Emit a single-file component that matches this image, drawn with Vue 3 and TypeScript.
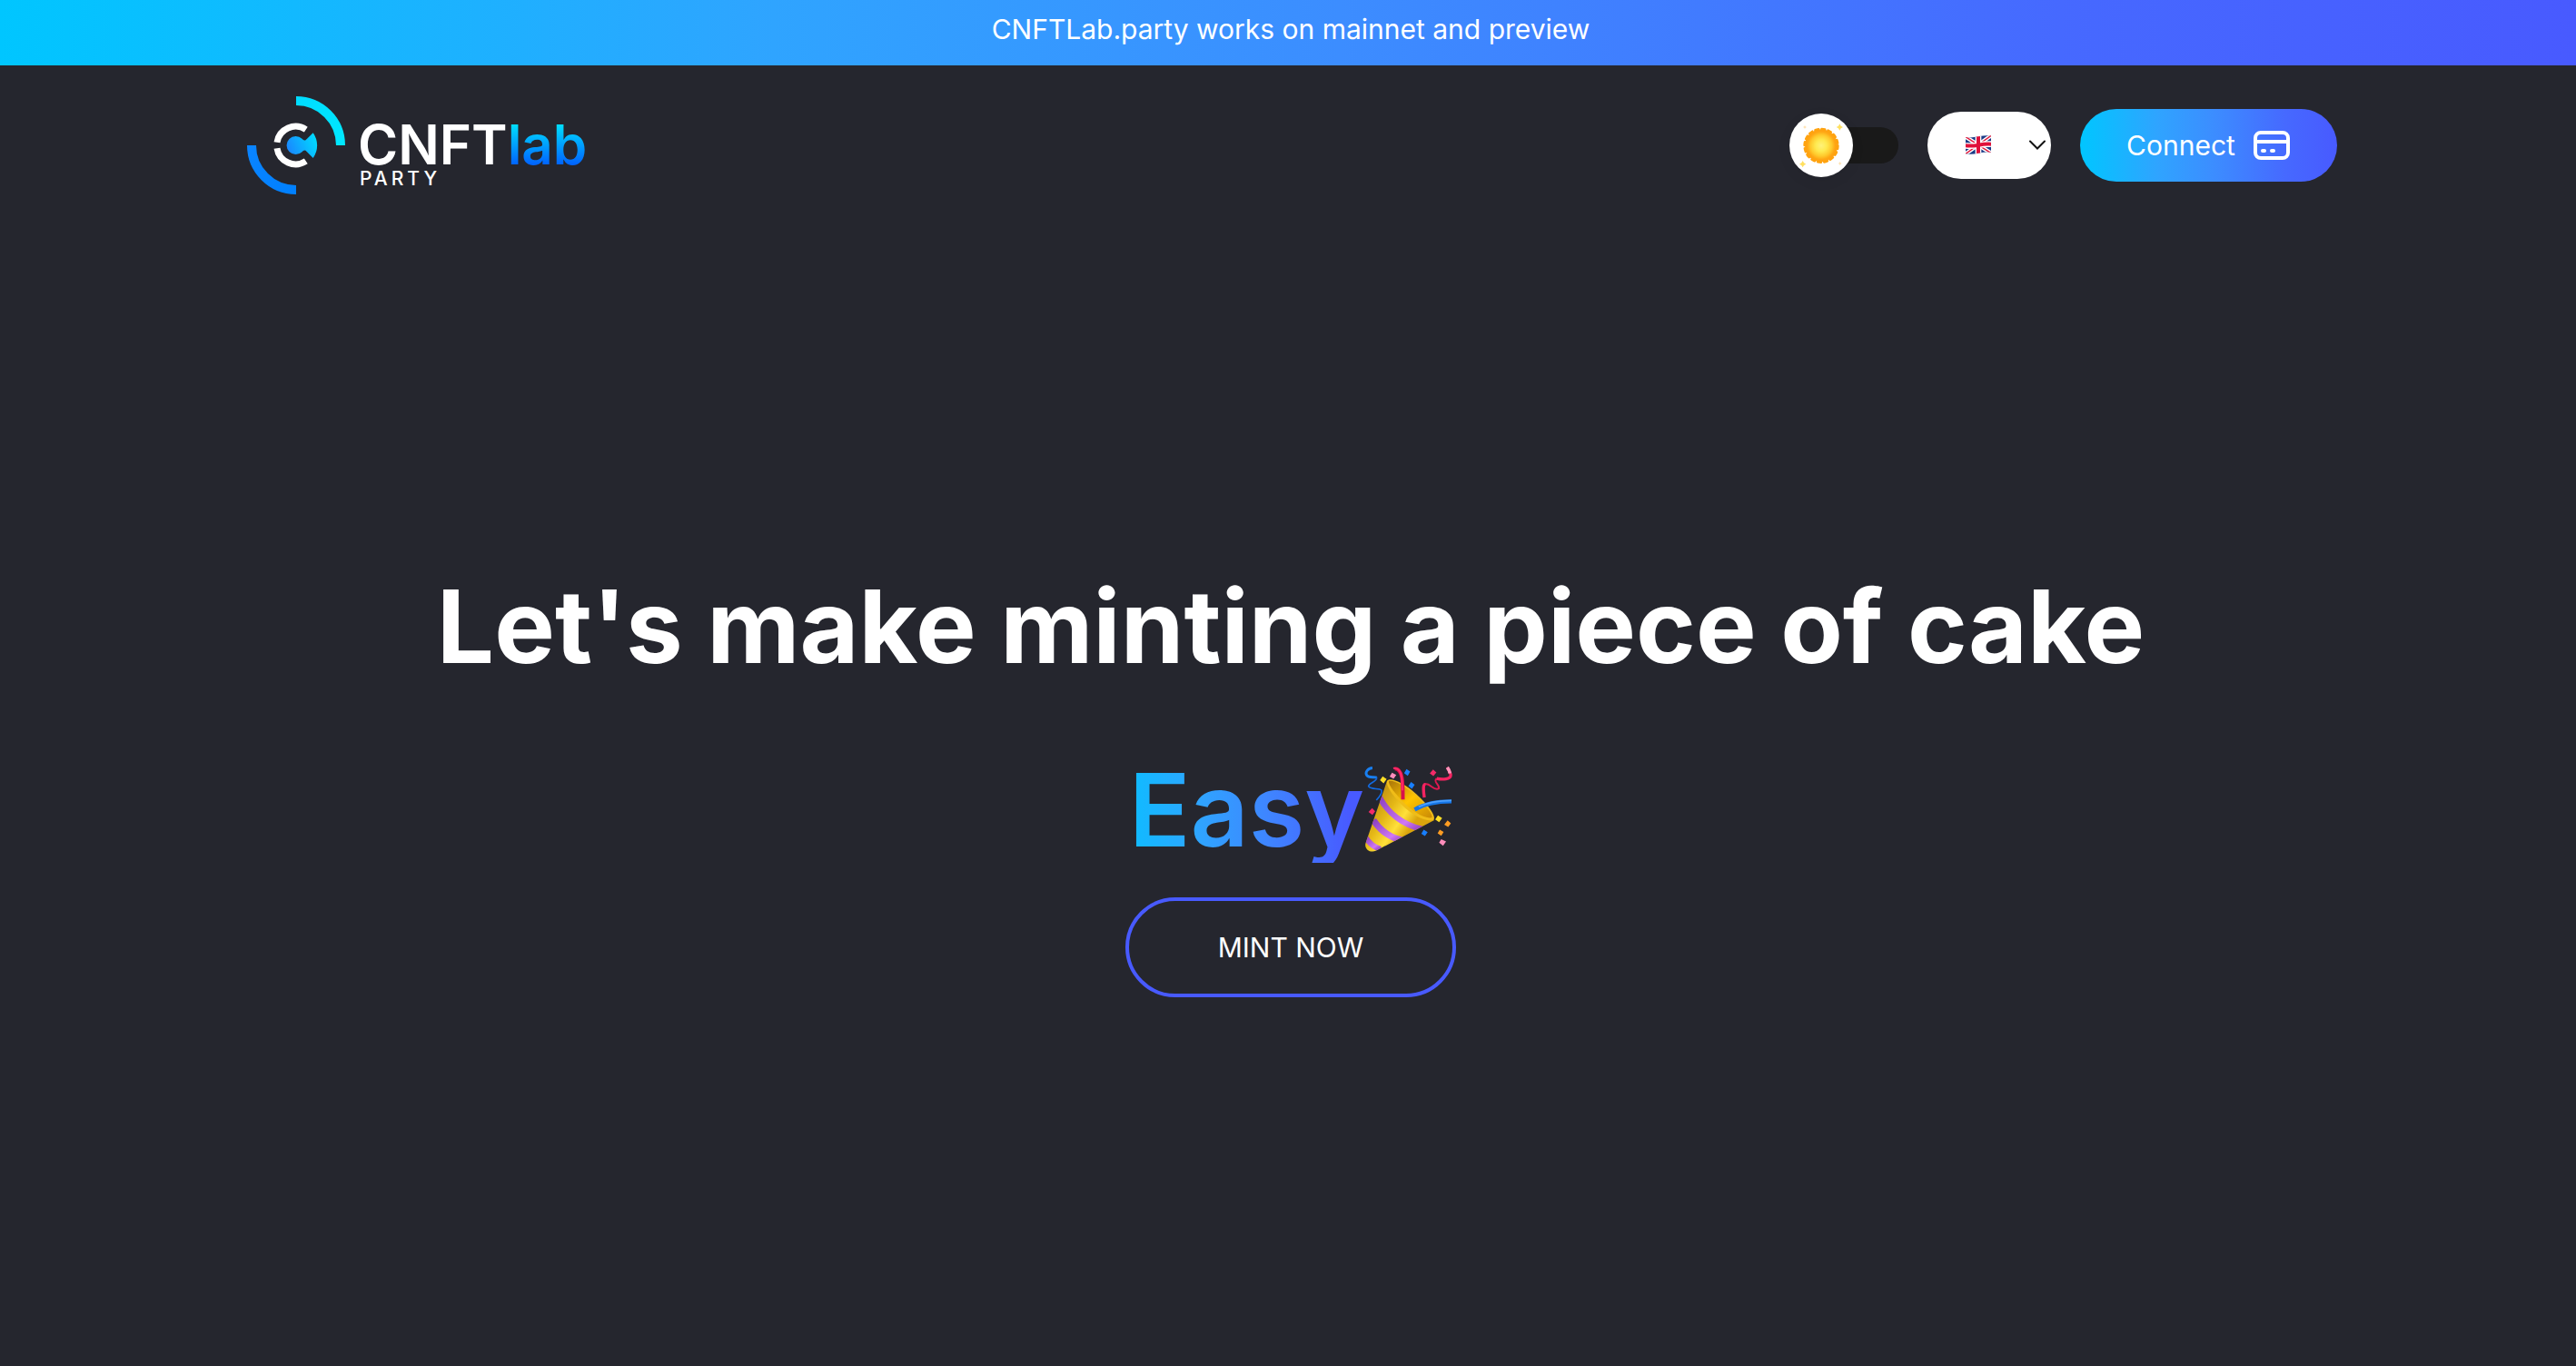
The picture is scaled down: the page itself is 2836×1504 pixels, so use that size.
<script setup lang="ts">
import { ref } from 'vue'

interface Language {
  code: string
  name: string
}

const languages: Language[] = [
  { code: 'en', name: 'English' },
  { code: 'es', name: 'Español' },
]

const language = ref('en')
const darkMode = ref(false)
const notice = 'CNFTLab.party works on mainnet and preview'
</script>

<template>
  <div class="page">
    <p class="notice">{{ notice }}</p>

    <header class="header">
      <a class="logo" href="#" aria-label="CNFTlab Party home">
        <svg width="382" height="108" viewBox="0 0 382 108">
          <defs>
            <linearGradient id="arc-top" x1="0" y1="0" x2="1" y2="1">
              <stop offset="0" stop-color="#00dcff" />
              <stop offset="1" stop-color="#00e8ff" />
            </linearGradient>
            <linearGradient id="arc-bottom" x1="0" y1="0" x2="1" y2="1">
              <stop offset="0" stop-color="#0a84ff" />
              <stop offset="1" stop-color="#0080ff" />
            </linearGradient>
            <linearGradient id="fish" gradientUnits="userSpaceOnUse" x1="44" y1="60" x2="76" y2="46">
              <stop offset="0" stop-color="#1a84ff" />
              <stop offset="1" stop-color="#00dcff" />
            </linearGradient>
            <linearGradient id="lab" gradientUnits="userSpaceOnUse" x1="0" y1="32" x2="0" y2="75">
              <stop offset="0" stop-color="#00dcff" />
              <stop offset="1" stop-color="#0064ff" />
            </linearGradient>
          </defs>
          <path d="M54 5A49 49 0 0 1 103 54" fill="none" stroke="url(#arc-top)" stroke-width="10" />
          <path d="M5 54A49 49 0 0 0 54 103" fill="none" stroke="url(#arc-bottom)" stroke-width="10" />
          <path d="M33 50.7A20.7 20.7 0 0 1 64.8 36.6M33 57.3A20.7 20.7 0 0 0 64.8 71.4" fill="none" stroke="#fff" stroke-width="7" />
          <path d="M60.5 46.8Q62.5 49.5 64.5 48.2L72.7 40.2A24 24 0 0 1 72.7 68L64.5 59.8Q62.5 58.5 60.5 61.2A10 10 0 1 1 60.5 46.8Z" fill="url(#fish)" />
          <text class="logo-main" x="122" y="75">CNFT<tspan fill="url(#lab)">lab</tspan></text>
          <text class="logo-party" x="124" y="98">PARTY</text>
        </svg>
      </a>

      <div class="controls">
        <label class="theme">
          <input v-model="darkMode" type="checkbox" role="switch" aria-label="Dark mode" />
          <span class="thumb">
            <svg width="44" height="44" viewBox="0 0 132 132">
              <defs>
                <radialGradient id="sun">
                  <stop offset="0" stop-color="#fff27a" />
                  <stop offset=".35" stop-color="#ffe94f" />
                  <stop offset=".65" stop-color="#ffc92c" />
                  <stop offset=".85" stop-color="#ffa614" />
                  <stop offset="1" stop-color="#ffa010" />
                </radialGradient>
              </defs>
              <circle cx="66" cy="67" r="54" fill="url(#sun)" />
              <circle cx="66" cy="67" r="55" fill="none" stroke="#ffa30f" stroke-width="8" stroke-linecap="round" stroke-dasharray="11 10.6" />
              <g fill="#ffe060">
                <path d="M127-5l4 7 7 4-7 4-4 7-4-7-7-4 7-4zM5 117l4 7 7 4-7 4-4 7-4-7-7-4 7-4z" />
                <path d="M12 0l2 4 4 2-4 2-2 4-2-4-4-2 4-2zM128 120l2 4 4 2-4 2-2 4-2-4-4-2 4-2z" fill="#ffe2b0" />
              </g>
            </svg>
          </span>
        </label>

        <div class="language">
          <select v-model="language" aria-label="Language">
            <option v-for="item in languages" :key="item.code" :value="item.code">{{ item.name }}</option>
          </select>
          <svg class="flag" width="28" height="22" viewBox="0 0 84 66">
            <defs>
              <clipPath id="flag-shape">
                <path d="M0 6Q20 9 42 4T84 1V56Q64 54 42 59T0 61Z" />
              </clipPath>
            </defs>
            <g clip-path="url(#flag-shape)">
              <path fill="#1c3b86" d="M0 0h84v66H0z" />
              <path d="M0 5L84 59M0 61L84 1" stroke="#fff" stroke-width="13" />
              <path d="M0 5L84 59M0 61L84 1" stroke="#e01a3c" stroke-width="4" />
              <path d="M42 0V66M0 34Q20 36 42 32T84 29" fill="none" stroke="#fff" stroke-width="20" />
              <path d="M42 0V66M0 34Q20 36 42 32T84 29" fill="none" stroke="#e0103a" stroke-width="12" />
            </g>
          </svg>
          <svg class="chevron" width="18" height="12" viewBox="0 0 18 12">
            <path d="M1 1.5l8 8 8-8" fill="none" stroke="#111" stroke-width="2" stroke-linecap="round" />
          </svg>
        </div>

        <button class="connect" type="button">
          Connect
          <svg width="40" height="32" viewBox="0 0 40 32" fill="none" stroke="#fff" stroke-width="4">
            <rect x="2" y="2" width="36" height="28" rx="6" />
            <path d="M2 12h36" />
            <path d="M10 22h2M20 22h2" stroke-linecap="round" />
          </svg>
        </button>
      </div>
    </header>

    <main class="hero">
      <h1>Let's make minting a piece of cake</h1>
      <p class="easy">
        <span>Easy</span>
        <svg width="97" height="96" viewBox="62 66 292 288" role="img" aria-label="Party popper">
          <defs>
            <linearGradient id="cone" gradientUnits="userSpaceOnUse" x1="85" y1="215" x2="200" y2="295">
              <stop offset="0" stop-color="#c99a12" />
              <stop offset=".35" stop-color="#e5b817" />
              <stop offset=".7" stop-color="#ffe03a" />
              <stop offset="1" stop-color="#dba50d" />
            </linearGradient>
            <linearGradient id="mouth" x1="0" y1="0" x2="1" y2="1">
              <stop offset="0" stop-color="#a8750a" />
              <stop offset=".5" stop-color="#ffc400" />
              <stop offset="1" stop-color="#c98a06" />
            </linearGradient>
            <linearGradient id="band" x1="0" y1="0" x2="1" y2="1">
              <stop offset="0" stop-color="#8a3fc0" />
              <stop offset=".7" stop-color="#d078f5" />
              <stop offset="1" stop-color="#8d3dbd" />
            </linearGradient>
            <clipPath id="cone-shape">
              <path d="M137 117C150 170 220 235 294 246L100 348C82 356 62 342 66 324Z" />
            </clipPath>
          </defs>
          <path d="M137 117C150 170 220 235 294 246L100 348C82 356 62 342 66 324Z" fill="url(#cone)" />
          <g clip-path="url(#cone-shape)" fill="none" stroke="url(#band)">
            <path d="M112 168C138 222 190 262 254 276" stroke-width="19" />
            <path d="M92 246C116 282 148 306 192 314" stroke-width="21" />
            <path d="M66 303C78 322 94 336 116 342" stroke-width="18" />
          </g>
          <path d="M137 117C144 100 194 122 235 160C272 194 302 232 292 246C266 254 218 228 186 195C158 167 134 135 137 117Z" fill="#f0bd18" />
          <path d="M143 117C156 110 196 132 230 163C263 194 290 226 286 238C260 242 222 218 192 187C166 160 142 132 143 117Z" fill="url(#mouth)" />
          <path d="M163 75C190 76 190 120 190 178" fill="none" stroke="#d80f4b" stroke-width="12" />
          <path d="M161 74C184 73 188 101 188 145" fill="none" stroke="#ff2866" stroke-width="7" stroke-linecap="round" />
          <path d="M229 211C260 192 300 184 351 184" fill="none" stroke="#1676e8" stroke-width="13" />
          <path d="M242 202C270 188 310 181 351 181" fill="none" stroke="#4ca0ff" stroke-width="5" />
          <path d="M89 73C74 74 64 87 70 97C76 108 97 101 103 105" fill="none" stroke="#197ff0" stroke-width="9" />
          <path d="M103 105C105 118 77 123 76 134C86 147 111 138 119 147Q123 157 102 180" fill="none" stroke="#126ae0" stroke-width="5" />
          <path d="M261 171L259 140Q261 122 274 128C286 134 297 149 309 141C313 129 288 119 302 108" fill="none" stroke="#df1950" stroke-width="6" />
          <path d="M261 171C258 152 255 125 265 128M302 108C318 112 352 113 348 94Q344 82 337 71" fill="none" stroke="#f42461" stroke-width="10" />
          <path d="M346 91Q344 80 337 71" fill="none" stroke="#ff94ba" stroke-width="11" />
          <g fill="#187fff">
            <path d="M202 77l12 8-8 14-12-9zM217 120l12 9-9 13-12-9zM259 278l13 8-9 13-12-8z" />
          </g>
          <g fill="#ffdf26">
            <path d="M123 101l13 9-10 14-12-10zM306 230l14 9-10 14-13-9z" />
          </g>
          <g fill="#ff9d22">
            <path d="M338 247l11 10-9 12-13-8zM312 278l13 7-8 13-12-8z" />
          </g>
          <g fill="#ff8dbb">
            <path d="M154 89l14 7-9 13-13-7zM317 309l16 8-10 14-13-10z" />
          </g>
          <path d="M290 78l11 10-10 12-12-9zM88 206l10 11-9 12-13-10z" fill="#f32b68" />
        </svg>
      </p>
      <a class="mint" href="#">MINT NOW</a>
    </main>
  </div>
</template>

<style>
body {
  margin: 0;
  background: #25262e;
}
</style>

<style scoped>
.page {
  --brand: linear-gradient(90deg, #00c6ff 0%, #2fa4ff 30%, #3c8dff 52%, #4669ff 80%, #485aff 100%);
  display: flex;
  flex-direction: column;
  min-height: 100vh;
  background: #25262e;
  color: #fff;
  font-family: Inter, "Liberation Sans", sans-serif;
  font-size: 30px;
}

.notice {
  box-sizing: border-box;
  min-height: 72px;
  margin: 0;
  padding: 0 0 8px 6px;
  background: var(--brand);
  line-height: 64px;
  text-align: center;
}

.header {
  box-sizing: border-box;
  display: flex;
  align-items: center;
  justify-content: space-between;
  width: 100%;
  max-width: 2365px;
  min-height: 176px;
  margin: 0 auto;
  padding: 0 28px 0 36px;
}

.logo,
.logo svg {
  display: block;
}

.logo svg {
  overflow: visible;
}

.logo-main,
.logo-party {
  fill: #fff;
  font-family: Inter, sans-serif;
}

.logo-main {
  font-size: 60px;
  font-weight: 600;
}

.logo-party {
  font-size: 21px;
  font-weight: 500;
  letter-spacing: 4px;
}

.controls {
  display: flex;
  align-items: center;
  gap: 32px;
}

.theme {
  position: relative;
  display: flex;
  align-items: center;
  width: 120px;
  height: 70px;
}

.theme input {
  appearance: none;
  width: 120px;
  height: 40px;
  margin: 0;
  border-radius: 20px;
  background: #191919;
}

.thumb {
  position: absolute;
  top: 0;
  left: 0;
  display: flex;
  align-items: center;
  justify-content: center;
  width: 70px;
  height: 70px;
  border-radius: 50%;
  background: #fff;
  box-shadow: 0 4px 16px rgb(0 0 0 / 6%);
}

.thumb svg {
  overflow: visible;
}

.language {
  position: relative;
  width: 136px;
  height: 74px;
}

.language select {
  appearance: none;
  width: 100%;
  height: 100%;
  padding: 0 40px;
  border: 0;
  border-radius: 37px;
  background: #fff;
  color: transparent;
  font: inherit;
}

.language option {
  color: #111;
}

.flag,
.chevron {
  position: absolute;
  pointer-events: none;
}

.flag {
  top: 26px;
  left: 42px;
}

.chevron {
  top: 31px;
  right: 6px;
}

.connect {
  display: flex;
  align-items: center;
  justify-content: center;
  gap: 20px;
  width: 283px;
  height: 80px;
  padding: 0;
  border: 0;
  border-radius: 40px;
  background: var(--brand);
  color: #fff;
  font: inherit;
}

.hero {
  display: flex;
  flex: 1;
  flex-direction: column;
  align-items: center;
  justify-content: center;
  padding: 0 0 24px 6px;
}

h1 {
  margin: 0 0 84px;
  font-size: 112px;
  font-weight: 700;
  line-height: 118px;
  text-align: center;
}

.easy {
  display: flex;
  align-items: center;
  margin: 0 0 38px;
  font-size: 112px;
  font-weight: 600;
  line-height: 118px;
}

.easy span {
  background: linear-gradient(90deg, #0fbcff 0%, #2fa4ff 30%, #3f84ff 60%, #485aff 94%);
  background-clip: text;
  color: transparent;
}

.mint {
  box-sizing: border-box;
  width: 364px;
  height: 110px;
  border: 4px solid #485aff;
  border-radius: 55px;
  color: #fff;
  line-height: 102px;
  text-align: center;
  text-decoration: none;
}
</style>
